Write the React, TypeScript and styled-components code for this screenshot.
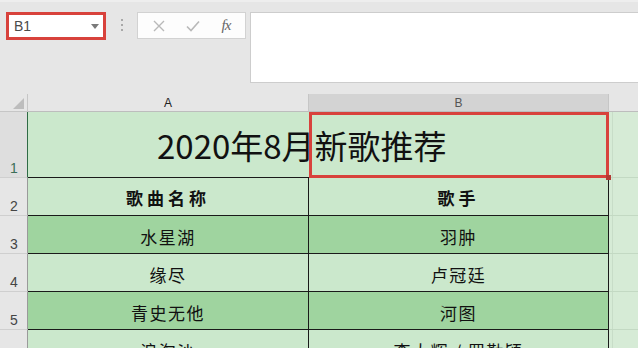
import * as React from 'react';
import styled, { createGlobalStyle } from 'styled-components';

const GlobalStyle = createGlobalStyle`
  html, body {
    margin: 0;
    padding: 0;
    background: #e6e6e6;
    font-family: "Noto Sans CJK SC", "Noto Sans", sans-serif;
  }
`;

const Page = styled.div`
  width: 638px;
  height: 348px;
  overflow: hidden;
  background: #e6e6e6;
`;

const Toolbar = styled.div`
  display: flex;
  align-items: flex-start;
  height: 94px;
  box-sizing: border-box;
  padding-top: 10px;
  padding-left: 6px;
  border-top: 2px solid #eeeeee;
`;

const NameBox = styled.div`
  width: 100px;
  height: 28px;
  box-sizing: border-box;
  border: 3px solid #d8423c;
  background: #fff;
  display: flex;
  align-items: center;
  justify-content: space-between;
  padding: 0 4px 0 5px;
  font-family: "Liberation Sans", "Noto Sans", sans-serif;
  font-size: 14px;
  color: #4a4a4a;
`;

const Caret = styled.span`
  width: 0;
  height: 0;
  border-left: 4px solid transparent;
  border-right: 4px solid transparent;
  border-top: 5px solid #7a7a7a;
`;

const Dots = styled.div`
  display: flex;
  flex-direction: column;
  gap: 3px;
  margin: 7px 14px 0 15px;
  span {
    width: 2px;
    height: 2px;
    background: #a8a8a8;
  }
`;

const FxButtons = styled.div`
  width: 109px;
  height: 27px;
  box-sizing: border-box;
  border: 1px solid #d2d2d2;
  background: #fdfdfd;
  display: flex;
  align-items: center;
  justify-content: space-around;
  padding: 0 4px;
`;

const FxLabel = styled.span`
  font-family: "Liberation Serif", serif;
  font-style: italic;
  font-size: 15px;
  color: #666;
  letter-spacing: -1px;
`;

const FormulaInput = styled.div`
  flex: 1;
  height: 71px;
  margin-left: 4px;
  box-sizing: border-box;
  background: #fff;
  border: 1px solid #cdcdcd;
  border-right: none;
`;

const Row = styled.div<{ $h: number }>`
  display: grid;
  grid-template-columns: 28px 281px 300px 1fr;
  height: ${(p) => p.$h}px;
`;

const Corner = styled.div`
  background: #e6e6e6;
  border-right: 1px solid #c6c6c6;
  border-bottom: 1px solid #c6c6c6;
  display: flex;
  align-items: flex-end;
  justify-content: flex-end;
  padding: 0 3px 2px 0;
`;

const ColHead = styled.div<{ $active?: boolean }>`
  background: ${(p) => (p.$active ? '#d3d3d3' : '#e6e6e6')};
  border-right: 1px solid #c6c6c6;
  border-bottom: 1px solid #bdbdbd;
  display: flex;
  align-items: center;
  justify-content: center;
  font-family: "Liberation Sans", sans-serif;
  font-size: 12px;
  color: ${(p) => (p.$active ? '#555' : '#222')};
`;

const HeadFiller = styled.div`
  background: #e6e6e6;
  border-bottom: 1px solid #bdbdbd;
`;

const RowHead = styled.div<{ $active?: boolean }>`
  background: ${(p) => (p.$active ? '#dedede' : '#e6e6e6')};
  border-right: 1px solid ${(p) => (p.$active ? '#2f6b45' : '#9a9a9a')};
  border-bottom: 1px solid #cfcfcf;
  display: flex;
  align-items: flex-end;
  padding: 0 0 1px 10px;
  font-family: "Liberation Sans", sans-serif;
  font-size: 14px;
  color: ${(p) => (p.$active ? '#3c6f58' : '#444')};
`;

const Cell = styled.div<{ $dark?: boolean; $bold?: boolean }>`
  background: ${(p) => (p.$dark ? '#9fd49f' : '#cbe8cc')};
  border-right: 1px solid #1a1a1a;
  border-bottom: 1px solid #1a1a1a;
  display: flex;
  align-items: flex-start;
  justify-content: center;
  padding-top: ${(p) => (p.$bold ? 7 : 8)}px;
  font-size: 17px;
  font-weight: ${(p) => (p.$bold ? 700 : 400)};
  letter-spacing: ${(p) => (p.$bold ? 4 : 1.5)}px;
  color: #111;
`;

const Filler = styled.div`
  background: #d6ebd6;
  border-bottom: 1px solid #c3d9c3;
  box-shadow: inset 3px 0 0 #d6ebd6, inset 4px 0 0 #c8ddc8;
`;

const TitleCell = styled.div`
  grid-column: span 2;
  position: relative;
  background: #cbe8cc;
  border-bottom: 1px solid #1a1a1a;
  display: flex;
  align-items: center;
  padding-left: 129px;
  font-size: 33px;
  color: #111;
`;

const Selection = styled.div`
  position: absolute;
  left: 281px;
  top: 0;
  width: 300px;
  height: 66px;
  box-sizing: border-box;
  border: 3px solid #d8423c;
  &::after {
    content: '';
    position: absolute;
    right: -5px;
    bottom: -5px;
    width: 5px;
    height: 5px;
    background: #b33a34;
  }
`;

const songs = [
  { title: '水星湖', artist: '羽肿' },
  { title: '缘尽', artist: '卢冠廷' },
  { title: '青史无他', artist: '河图' },
  { title: '浪淘沙', artist: '李大辉 / 罗勤颖' },
];

const App = () => (
  <Page>
    <GlobalStyle />
    <Toolbar>
      <NameBox>
        B1
        <Caret />
      </NameBox>
      <Dots>
        <span />
        <span />
        <span />
      </Dots>
      <FxButtons>
        <svg width="12" height="12" viewBox="0 0 12 12">
          <path d="M1 1 L11 11 M11 1 L1 11" stroke="#b9b9b9" strokeWidth="1.4" />
        </svg>
        <svg width="14" height="12" viewBox="0 0 14 12">
          <path d="M1 6.5 L5 10.5 L13 1.5" stroke="#b9b9b9" strokeWidth="1.6" fill="none" />
        </svg>
        <FxLabel>fx</FxLabel>
      </FxButtons>
      <FormulaInput />
    </Toolbar>

    <Row $h={18}>
      <Corner>
        <svg width="11" height="11" viewBox="0 0 11 11">
          <path d="M11 0 L11 11 L0 11 Z" fill="#bdbdbd" />
        </svg>
      </Corner>
      <ColHead>A</ColHead>
      <ColHead $active>B</ColHead>
      <HeadFiller />
    </Row>

    <Row $h={66}>
      <RowHead $active>1</RowHead>
      <TitleCell>
        2020年8月新歌推荐
        <Selection />
      </TitleCell>
      <Filler />
    </Row>

    <Row $h={38}>
      <RowHead>2</RowHead>
      <Cell $bold>歌曲名称</Cell>
      <Cell $bold>歌手</Cell>
      <Filler />
    </Row>

    {songs.map((s, i) => (
      <Row $h={38} key={s.title}>
        <RowHead>{i + 3}</RowHead>
        <Cell $dark={i % 2 === 0}>{s.title}</Cell>
        <Cell $dark={i % 2 === 0}>{s.artist}</Cell>
        <Filler />
      </Row>
    ))}
  </Page>
);

export default App;
